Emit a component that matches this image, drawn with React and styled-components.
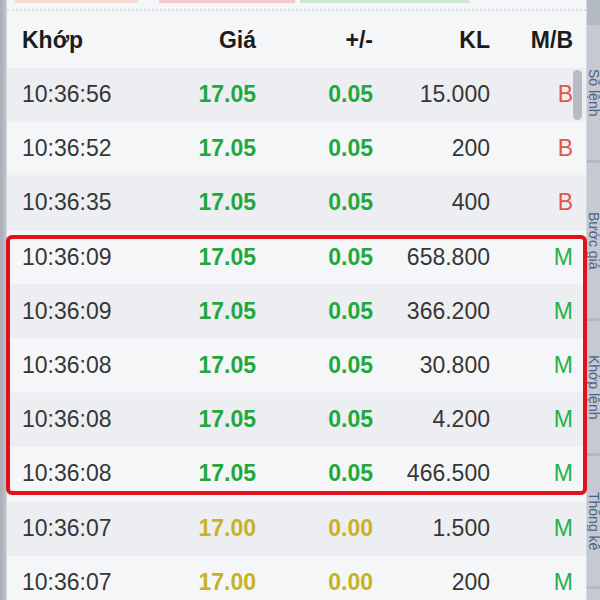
import React from 'react';
import styled, { createGlobalStyle } from 'styled-components';

const GlobalStyle = createGlobalStyle`
  html, body {
    margin: 0;
    padding: 0;
    background: #f4f5f7;
  }
  body {
    font-family: "Liberation Sans", Arial, sans-serif;
  }
`;

const trades = [
  { time: '10:36:56', price: '17.05', change: '0.05', vol: '15.000', side: 'B', tone: 'up' },
  { time: '10:36:52', price: '17.05', change: '0.05', vol: '200', side: 'B', tone: 'up' },
  { time: '10:36:35', price: '17.05', change: '0.05', vol: '400', side: 'B', tone: 'up' },
  { time: '10:36:09', price: '17.05', change: '0.05', vol: '658.800', side: 'M', tone: 'up', marked: true },
  { time: '10:36:09', price: '17.05', change: '0.05', vol: '366.200', side: 'M', tone: 'up', marked: true },
  { time: '10:36:08', price: '17.05', change: '0.05', vol: '30.800', side: 'M', tone: 'up', marked: true },
  { time: '10:36:08', price: '17.05', change: '0.05', vol: '4.200', side: 'M', tone: 'up', marked: true },
  { time: '10:36:08', price: '17.05', change: '0.05', vol: '466.500', side: 'M', tone: 'up', marked: true },
  { time: '10:36:07', price: '17.00', change: '0.00', vol: '1.500', side: 'M', tone: 'ref' },
  { time: '10:36:07', price: '17.00', change: '0.00', vol: '200', side: 'M', tone: 'ref' },
];

const toneColor = {
  up: '#1fa83c',
  ref: '#c9b21f',
};

const sideColor = {
  B: '#e2574c',
  M: '#27b04a',
};

const Screen = styled.div`
  display: flex;
  width: 600px;
  height: 600px;
  overflow: hidden;
  background: #f4f5f7;
`;

const LeftEdge = styled.div`
  width: 7px;
  flex: 0 0 7px;
  background: linear-gradient(90deg, #a9adb5 0, #b8bcc3 5px, #d7dae0 7px);
`;

const Panel = styled.div`
  position: relative;
  flex: 1;
  display: flex;
  flex-direction: column;
  min-width: 0;
  background: #f5f6f8;

  & > * {
    flex-shrink: 0;
  }
`;

const VolumeBar = styled.div`
  display: flex;
  height: 3px;
  padding-left: 8px;
`;

const VolumeSegment = styled.div`
  width: ${(p) => p.$w}px;
  margin-right: ${(p) => p.$gap || 0}px;
  background: ${(p) => p.$color};
`;

const Dotted = styled.div`
  margin-top: 6px;
  height: 0;
  border-top: 2px dotted #d9dde5;
`;

const Grid = styled.div`
  display: grid;
  grid-template-columns: 135px 99px 117px 117px 83px;
  align-items: center;
  padding-left: 15px;
  font-size: 23px;
  flex-shrink: 0;
`;

const HeaderRow = styled(Grid)`
  height: 57px;
  padding-top: 2px;
  box-sizing: border-box;
  font-weight: 700;
  color: #1c1c1c;
`;

const HeadCell = styled.div`
  text-align: ${(p) => (p.$left ? 'left' : 'right')};
`;

const Body = styled.div`
  position: relative;
  display: flex;
  flex-direction: column;
`;

const Row = styled(Grid)`
  height: 54.2px;
  background: ${(p) => (p.$odd ? '#eceef2' : '#f5f6f8')};
  border-bottom: 1px solid #eef0f3;
  box-sizing: border-box;
`;

const Time = styled.div`
  color: #363636;
`;

const Num = styled.div`
  text-align: right;
  font-weight: ${(p) => (p.$bold ? 700 : 400)};
  color: ${(p) => p.$color || '#363636'};
`;

const Marked = styled.div`
  position: relative;
  display: flex;
  flex-direction: column;
  flex-shrink: 0;

  &::after {
    content: '';
    position: absolute;
    top: 4px;
    bottom: 7px;
    left: -1px;
    right: -1px;
    border: 4px solid #e2121b;
    border-radius: 6px;
    pointer-events: none;
  }
`;

const Scroll = styled.div`
  position: absolute;
  top: 2px;
  right: 4px;
  width: 9px;
  height: 50px;
  border-radius: 5px;
  background: #b7bbc2;
`;

const SideTabs = styled.div`
  width: 13px;
  flex: 0 0 13px;
  display: flex;
  flex-direction: column;
  background: #c4c9d2;
  border-left: 1px solid #d5d9e0;
`;

const SideTab = styled.div`
  flex: 0 0 ${(p) => p.$h}px;
  display: flex;
  align-items: center;
  justify-content: center;
  writing-mode: vertical-rl;
  font-size: 14px;
  color: #4f6186;
  border-bottom: 3px solid #b3b8c2;
  overflow: hidden;
  white-space: nowrap;
  background: ${(p) => (p.$dark ? '#b4bac4' : 'transparent')};
`;

function TradeRow({ t, index }) {
  return (
    <Row $odd={index % 2 === 0}>
      <Time>{t.time}</Time>
      <Num $bold $color={toneColor[t.tone]}>{t.price}</Num>
      <Num $bold $color={toneColor[t.tone]}>{t.change}</Num>
      <Num>{t.vol}</Num>
      <Num $color={sideColor[t.side]}>{t.side}</Num>
    </Row>
  );
}

export default function App() {
  const before = trades.slice(0, 3);
  const marked = trades.slice(3, 8);
  const after = trades.slice(8);

  return (
    <Screen>
      <GlobalStyle />
      <LeftEdge />
      <Panel>
        <VolumeBar>
          <VolumeSegment $w={123} $gap={21} $color="#f3dcd2" />
          <VolumeSegment $w={136} $gap={5} $color="#f4c9cc" />
          <VolumeSegment $w={170} $color="#cde9d2" />
        </VolumeBar>
        <Dotted />
        <HeaderRow>
          <HeadCell $left>Khớp</HeadCell>
          <HeadCell>Giá</HeadCell>
          <HeadCell>+/-</HeadCell>
          <HeadCell>KL</HeadCell>
          <HeadCell>M/B</HeadCell>
        </HeaderRow>
        <Body>
          {before.map((t, i) => (
            <TradeRow key={i} t={t} index={i} />
          ))}
          <Marked>
            {marked.map((t, i) => (
              <TradeRow key={i} t={t} index={i + 3} />
            ))}
          </Marked>
          {after.map((t, i) => (
            <TradeRow key={i} t={t} index={i + 8} />
          ))}
          <Scroll />
        </Body>
      </Panel>
      <SideTabs>
        <SideTab $h={22} $dark />
        <SideTab $h={135}>Sổ lệnh</SideTab>
        <SideTab $h={155}>Bước giá</SideTab>
        <SideTab $h={132}>Khớp lệnh</SideTab>
        <SideTab $h={130}>Thống kê</SideTab>
      </SideTabs>
    </Screen>
  );
}
